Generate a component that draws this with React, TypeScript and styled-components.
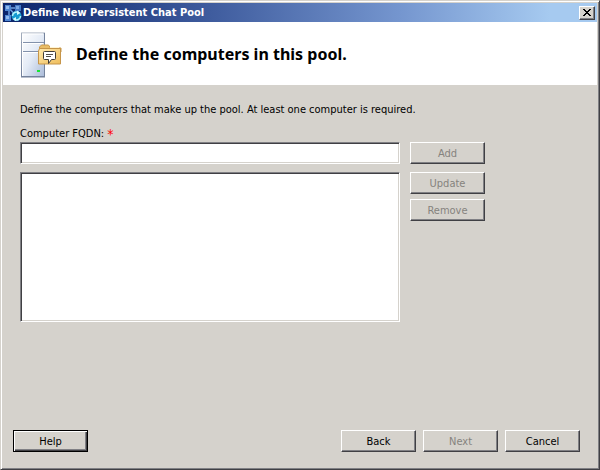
import React from "react";
import styled, { createGlobalStyle, css } from "styled-components";

const GlobalStyle = createGlobalStyle`
  *, *::before, *::after { box-sizing: border-box; }
  body {
    margin: 0;
    background: #d5d2cc;
    color: #000;
    font-family: "DejaVu Sans Condensed", Tahoma, "DejaVu Sans", sans-serif;
    font-size: 11px;
    line-height: 14px;
  }
`;

const Window = styled.main`
  display: flex;
  flex-direction: column;
  min-height: 100vh;
  padding: 1px;
  background: #d5d2cc;
  border: 1px solid;
  border-color: #d5d2cc #404044 #404044 #d5d2cc;
  box-shadow: inset 1px 1px #fff, inset -1px -1px #808084;
`;

const TitleBar = styled.header`
  display: flex;
  align-items: center;
  gap: 1px;
  height: 19px;
  margin: 1px 1px 0;
  padding: 0 2px;
  color: #fff;
  background: linear-gradient(90deg, #0a246a, #3f5c9e 35%, #7596cf 67%, #a6caf0 92%);
`;

const Title = styled.h1`
  flex: 1;
  margin: 0;
  font-size: 11px;
  font-weight: bold;
  white-space: nowrap;
`;

const raised = css`
  border: 1px solid;
  border-color: #fff #404044 #404044 #fff;
  box-shadow: inset -1px -1px #808084;
`;

const CloseButton = styled.button`
  ${raised}
  display: grid;
  place-items: center;
  width: 16px;
  height: 14px;
  padding: 0;
  background: #d5d2cc;
`;

const Banner = styled.section`
  display: flex;
  align-items: center;
  gap: 12px;
  height: 63px;
  margin: 0 1px;
  padding: 0 17px;
  background: #fff;
`;

const Heading = styled.h2`
  margin: 0;
  font-family: "Noto Sans", Tahoma, sans-serif;
  font-size: 16px;
  line-height: 24px;
  font-weight: bold;
`;

const Form = styled.form`
  display: flex;
  flex: 1;
  flex-direction: column;
  padding: 18px 18px 16px;
`;

const Intro = styled.p`
  margin: 0 0 10px;
`;

const FieldLabel = styled.label`
  margin-bottom: 1px;
`;

const Required = styled.span`
  color: #f00;
  font-size: 14px;
  line-height: 1;
  vertical-align: top;
`;

const Fields = styled.div`
  display: grid;
  grid-template-columns: minmax(0, 1fr) 75px;
  gap: 8px 10px;
  margin-right: 95px;
`;

const sunken = css`
  width: 100%;
  border: 1px solid;
  border-color: #808084 #fff #fff #808084;
  border-radius: 0;
  box-shadow: inset 1px 1px #404044, inset -1px -1px #d5d2cc;
  background: #fff;
  font: inherit;
  outline: none;
`;

const TextInput = styled.input`
  ${sunken}
  height: 22px;
  padding: 2px 4px;
`;

const ListBox = styled.select`
  ${sunken}
  appearance: none;
  height: 150px;
  padding: 2px;
  overflow: hidden;
`;

const ButtonStack = styled.div`
  display: flex;
  flex-direction: column;
  gap: 5px;
`;

const Button = styled.button<{ $default?: boolean }>`
  ${raised}
  width: 75px;
  height: 22px;
  padding: 1px 0 0;
  background: #d5d2cc;
  color: #000;
  font: inherit;
  &:disabled { color: #85837e; }
  ${({ $default }) =>
    $default &&
    css`
      border-color: #000;
      box-shadow: inset 1px 1px #fff, inset -1px -1px #404044, inset -2px -2px #808084;
    `}
`;

const Footer = styled.footer`
  display: flex;
  gap: 7px;
  margin: auto 0 0 -7px;
`;

const Spacer = styled.span`
  flex: 1;
`;

const AppIcon = () => (
  <svg width="17" height="18" viewBox="0 0 17 18" aria-hidden="true">
    <path d="M4 4h8M4 4v9M4 4l8 9M13 5v7" stroke="#6f9edb" strokeWidth="1.5" fill="none" />
    <rect x="0" y="1" width="6" height="6" fill="#4f87d3" />
    <rect x="1" y="2" width="3" height="3" fill="#91b9ed" />
    <rect x="10" y="1" width="6" height="6" fill="#4479c6" />
    <rect x="11" y="2" width="3" height="3" fill="#79a6e2" />
    <rect x="0" y="11" width="6" height="6" fill="#4f87d3" />
    <rect x="1" y="12" width="3" height="3" fill="#91b9ed" />
    <circle cx="11.500" cy="12" r="5" fill="#159bd0" />
    <path d="M7.500 12a4 4 0 0 1 6-3.500M15.500 12a4 4 0 0 1-6 3.500" stroke="#b4f1fb" strokeWidth="1.500" fill="none" />
    <path d="M12 6.500l3.500 2.500-3.500 2zM11 13v4l-3.500-2z" fill="#d2faff" />
  </svg>
);

const ServerIcon = () => (
  <svg width="44" height="48" viewBox="0 0 44 48" aria-hidden="true">
    <defs>
      <linearGradient id="tower" x1="0" y1="0" x2="1" y2="1">
        <stop offset="0" stopColor="#fff" />
        <stop offset=".5" stopColor="#e4ebf6" />
        <stop offset="1" stopColor="#a9bad8" />
      </linearGradient>
      <linearGradient id="edge" x1="0" y1="0" x2="0" y2="1">
        <stop offset="0" stopColor="#a3adbd" />
        <stop offset="1" stopColor="#71809c" />
      </linearGradient>
      <linearGradient id="folder" x1="0" y1="0" x2="1" y2="1">
        <stop offset="0" stopColor="#ffe9ac" />
        <stop offset="1" stopColor="#efbd5b" />
      </linearGradient>
    </defs>
    <rect x="1.500" y="3" width="23" height="44" fill="url(#tower)" stroke="url(#edge)" />
    <path d="M1 12.500h24M1 21.500h24" stroke="#8291ab" />
    <path d="M2 4h21M2 13.500h21M2 22.500h21M2.500 4v42" stroke="#fff" fill="none" />
    <path d="M24.500 3v44M1 46.500h24" stroke="#75839c" fill="none" />
    <path d="M17 41h3" stroke="#18e632" strokeWidth="2" />
    <path d="M19.500 19v-2l2-2h7l2 3h10.500v4h-21.500z" fill="#e8bd68" stroke="#c99a4b" />
    <rect x="30" y="17" width="9" height="2" fill="#fff4d2" />
    <path d="M19.500 18.500h21v15.500h-22v-13z" fill="url(#folder)" stroke="#c69549" />
    <path d="M24.500 21.500h10q1 0 1 1v6q0 1-1 1h-3l-3 4v-4h-4q-1 0-1-1v-6q0-1 1-1z" fill="#fff" stroke="#403c38" />
    <path d="M26 24.500h7M26 26.500h5" stroke="#55504a" />
  </svg>
);

export default function App() {
  return (
    <>
      <GlobalStyle />
      <Window>
        <TitleBar>
          <AppIcon />
          <Title>Define New Persistent Chat Pool</Title>
          <CloseButton type="button" aria-label="Close">
            <svg width="8" height="7" viewBox="0 0 8 7" aria-hidden="true">
              <path d="M0 0h2v1h1v1h2V1h1V0h2v1H7v1H6v1H5v1h1v1h1v1h1v1H6V6H5V5H3v1H2v1H0V6h1V5h1V4h1V3H2V2H1V1H0z" />
            </svg>
          </CloseButton>
        </TitleBar>
        <Banner>
          <ServerIcon />
          <Heading>Define the computers in this pool.</Heading>
        </Banner>
        <Form onSubmit={(event) => event.preventDefault()}>
          <Intro>Define the computers that make up the pool. At least one computer is required.</Intro>
          <FieldLabel htmlFor="fqdn">
            Computer FQDN: <Required>*</Required>
          </FieldLabel>
          <Fields>
            <TextInput id="fqdn" type="text" required />
            <Button type="button" disabled>Add</Button>
            <ListBox size={8} aria-label="Computers in the pool" />
            <ButtonStack>
              <Button type="button" disabled>Update</Button>
              <Button type="button" disabled>Remove</Button>
            </ButtonStack>
          </Fields>
          <Footer>
            <Button type="button" $default>Help</Button>
            <Spacer />
            <Button type="button">Back</Button>
            <Button type="submit" disabled>Next</Button>
            <Button type="button">Cancel</Button>
          </Footer>
        </Form>
      </Window>
    </>
  );
}
